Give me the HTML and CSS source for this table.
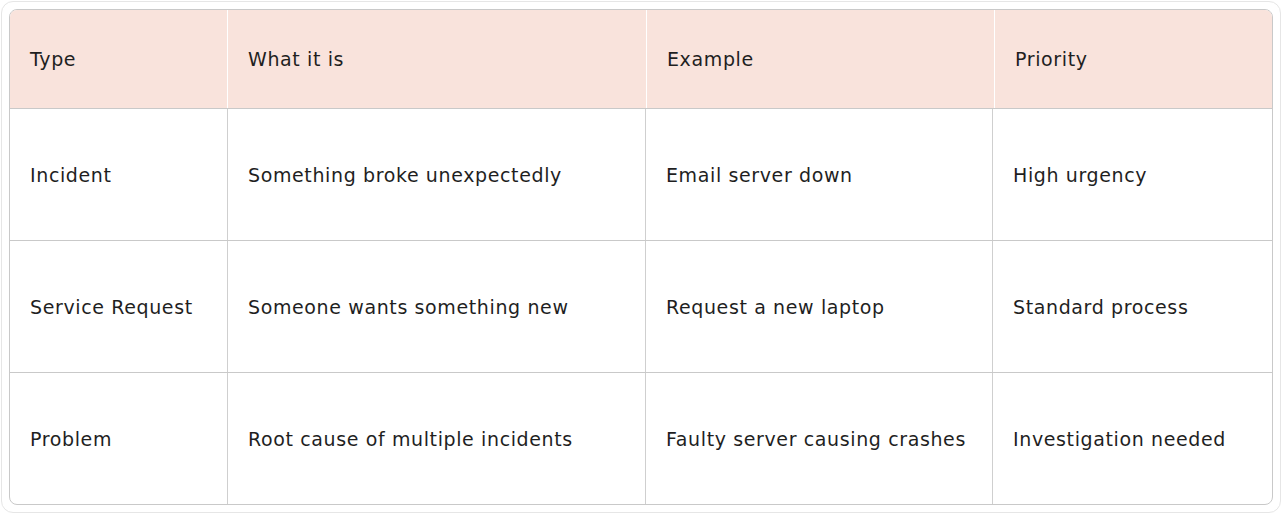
FILE: index.html
```html
<!DOCTYPE html>
<html>
<head>
<meta charset="utf-8">
<link rel="stylesheet" href="styles.css">
</head>
<body>
<div class="wrap">
  <div class="table">
    <div class="row head">
      <div class="cell">Type</div>
      <div class="cell">What it is</div>
      <div class="cell">Example</div>
      <div class="cell">Priority</div>
    </div>
    <div class="row body">
      <div class="cell">Incident</div>
      <div class="cell">Something broke unexpectedly</div>
      <div class="cell">Email server down</div>
      <div class="cell">High urgency</div>
    </div>
    <div class="row body">
      <div class="cell">Service Request</div>
      <div class="cell">Someone wants something new</div>
      <div class="cell">Request a new laptop</div>
      <div class="cell">Standard process</div>
    </div>
    <div class="row body last">
      <div class="cell">Problem</div>
      <div class="cell">Root cause of multiple incidents</div>
      <div class="cell">Faulty server causing crashes</div>
      <div class="cell">Investigation needed</div>
    </div>
  </div>
</div>
</body>
</html>
```

FILE: styles.css
```css
html, body {
  margin: 0;
  padding: 0;
  background: #ffffff;
}
body {
  padding: 1px;
  font-family: "DejaVu Sans", sans-serif;
  color: #1f1f1f;
}
.wrap {
  width: 1280px;
  height: 512px;
  box-sizing: border-box;
  border: 1px solid #e6e6e6;
  border-radius: 12px;
  padding: 7px;
}
.table {
  border: 1px solid #c9c9c9;
  border-radius: 8px;
  overflow: hidden;
}
.row {
  display: grid;
}
.head {
  grid-template-columns: 217px 419px 348px 1fr;
  height: 98px;
  background: #f9e3dc;
  border-bottom: 1px solid #c9c9c9;
}
.body {
  grid-template-columns: 217px 418px 347px 1fr;
  height: 131px;
  border-bottom: 1px solid #c9c9c9;
}
.body.last {
  border-bottom: none;
}
.cell {
  display: flex;
  align-items: center;
  padding-left: 20px;
  font-size: 19px;
  letter-spacing: 0.62px;
  white-space: nowrap;
}
.head .cell + .cell {
  border-left: 1px solid #ffffff;
}
.body .cell + .cell {
  border-left: 1px solid #cfcfcf;
}
```
